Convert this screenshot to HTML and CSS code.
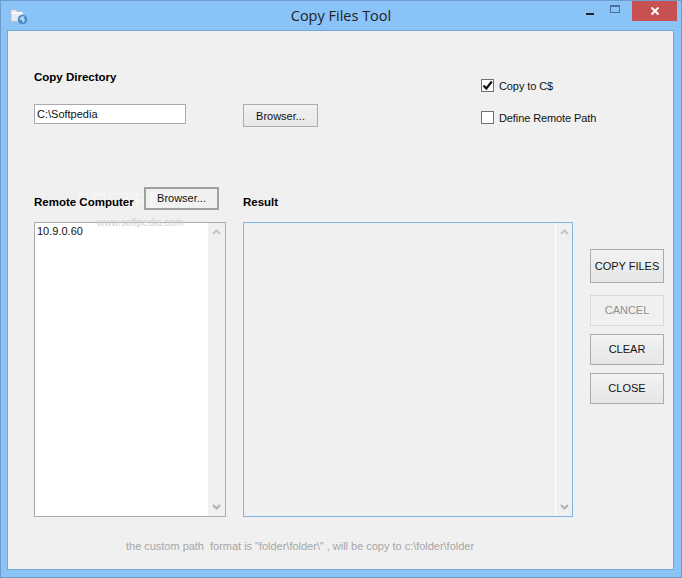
FILE: index.html
```html
<!DOCTYPE html>
<html lang="en">
<head>
<meta charset="utf-8">
<title>Copy Files Tool</title>
<link rel="stylesheet" href="styles.css">
</head>
<body>
<div class="window">
  <header class="titlebar">
    <svg class="app-icon" width="18" height="17" viewBox="0 0 18 17">
      <path d="M1 1.500h5l1 2h6v10H1z" fill="#e6ecf2" stroke="#b4c0cc" stroke-width="1"/>
      <path d="M1.500 5h11" stroke="#fff" stroke-width="1.500"/>
      <circle cx="12.500" cy="11.500" r="4.800" fill="#4a8ecb"/>
      <path d="M9.500 11c1-2.500 3.500-3 5-2.500l-1 2.300 1.800 1-2.300 3.200-1-2.800z" fill="#b4dcf5"/>
    </svg>
    <h1 class="title">Copy Files Tool</h1>
    <div class="caption-buttons">
      <span class="cap-btn"><span class="cap-min"></span></span>
      <span class="cap-btn"><span class="cap-max"></span></span>
      <span class="cap-close">
        <svg width="10" height="10" viewBox="0 0 10 10"><path d="M1.500 1.500l7 7M8.500 1.500l-7 7" stroke="#fff" stroke-width="2"/></svg>
      </span>
    </div>
  </header>
  <main class="client">
    <section class="top">
      <div class="dir-col">
        <label class="heading dir-heading">Copy Directory</label>
        <input class="textbox" type="text" value="C:\Softpedia">
      </div>
      <button class="btn browse-top">Browser...</button>
      <div class="options">
        <div class="check-row">
          <span class="checkbox">
            <svg width="11" height="11" viewBox="0 0 11 11"><path d="M1.500 5.500l2.800 3L9.800 1.500" fill="none" stroke="#111" stroke-width="2.200"/></svg>
          </span>
          <span>Copy to C$</span>
        </div>
        <div class="check-row">
          <span class="checkbox"></span>
          <span>Define Remote Path</span>
        </div>
      </div>
    </section>
    <section class="middle">
      <div class="remote-col">
        <div class="remote-head">
          <span class="wm wm-big">SOFTPEDIA</span>
          <span class="heading">Remote Computer</span>
          <button class="btn btn-focus">Browser...</button>
          <span class="wm wm-small">www.softpedia.com</span>
        </div>
        <div class="listbox">
          <div class="list-text">10.9.0.60</div>
          <div class="scrollbar">
            <svg class="arrow" width="9" height="6" viewBox="0 0 9 6"><path d="M1 5l3.500-3.500L8 5" fill="none" stroke="#c4c4c4" stroke-width="2"/></svg>
            <svg class="arrow" width="9" height="6" viewBox="0 0 9 6"><path d="M1 1l3.500 3.500L8 1" fill="none" stroke="#b0b0b0" stroke-width="2"/></svg>
          </div>
        </div>
      </div>
      <div class="result-col">
        <div class="result-head"><span class="heading">Result</span></div>
        <div class="listbox result-box">
          <div class="list-text"></div>
          <div class="scrollbar result-bar">
            <svg class="arrow" width="9" height="6" viewBox="0 0 9 6"><path d="M1 5l3.500-3.500L8 5" fill="none" stroke="#c4c4c4" stroke-width="2"/></svg>
            <svg class="arrow" width="9" height="6" viewBox="0 0 9 6"><path d="M1 1l3.500 3.500L8 1" fill="none" stroke="#b0b0b0" stroke-width="2"/></svg>
          </div>
        </div>
      </div>
      <div class="actions">
        <button class="btn act act-tall">COPY FILES</button>
        <button class="btn act btn-disabled" disabled>CANCEL</button>
        <button class="btn act act-clear">CLEAR</button>
        <button class="btn act act-close">CLOSE</button>
      </div>
    </section>
    <p class="hint">the custom path&nbsp; format is "folder\folder\" , will be copy to c:\folder\folder</p>
  </main>
</div>
</body>
</html>
```
FILE: styles.css
```css
* { box-sizing: border-box; }
html, body { margin: 0; padding: 0; }
body { width: 682px; height: 578px; overflow: hidden; font-family: "Liberation Sans", Arial, sans-serif; font-size: 11px; color: #111; }
.window { width: 682px; height: 578px; display: flex; flex-direction: column; background: #89c3f8; border: 1px solid #6f9cc8; padding: 0 7px 7px 6px; }
.titlebar { height: 29px; flex: none; display: flex; align-items: flex-start; position: relative; }
.app-icon { margin: 7px 0 0 3px; }
.title { position: absolute; left: 1px; right: 0; top: 6px; margin: 0; text-align: center; font: 400 14.500px/18px "Open Sans", sans-serif; color: #222; }
.caption-buttons { margin-left: auto; margin-right: -3px; display: flex; position: relative; }
.cap-btn { width: 30px; height: 20px; display: flex; align-items: center; justify-content: center; }
.cap-min { width: 8px; height: 2px; background: #222; margin-top: 5px; margin-left: 12px; }
.cap-max { width: 10px; height: 8px; border: 1px solid #4e6f93; border-top-width: 2px; margin-top: -4px; margin-left: 2px; }
.cap-close { width: 45px; height: 20px; margin-left: 3px; background: #c75050; display: flex; align-items: center; justify-content: center; }
.client { flex: 1; background: #f0f0f0; border: 1px solid #76a5d2; padding: 0 0 0 26px; display: flex; flex-direction: column; }
.top { display: flex; height: 156px; }
.dir-col { width: 209px; display: flex; flex-direction: column; align-items: flex-start; padding-top: 39px; }
.heading { font-weight: 700; font-size: 11.500px; line-height: 14px; color: #000; white-space: nowrap; }
.dir-heading { height: 14px; margin-bottom: 20px; }
.textbox { width: 152px; height: 20px; border: 1px solid #ababab; background: #fff; padding: 0 2px; font: 11px "Liberation Sans", sans-serif; color: #111; outline: none; }
.btn { background: linear-gradient(#f2f2f2, #e6e6e6); border: 1px solid #acacac; font: 11px "Liberation Sans", sans-serif; color: #111; padding: 0; width: 75px; height: 23px; }
.browse-top { margin-top: 73px; }
.options { margin-left: 163px; padding-top: 48px; display: flex; flex-direction: column; gap: 19px; letter-spacing: -.1px; }
.check-row { display: flex; align-items: center; gap: 5px; height: 13px; white-space: nowrap; }
.checkbox { width: 13px; height: 13px; border: 1px solid #707070; background: #fff; display: flex; align-items: center; justify-content: center; flex: none; }
.middle { display: flex; height: 330px; }
.remote-col { width: 192px; margin-right: 17px; display: flex; flex-direction: column; }
.remote-head { height: 35px; position: relative; display: flex; align-items: flex-start; }
.remote-head .heading { margin-top: 8px; width: 110px; position: relative; }
.btn-focus { border: 2px solid #a0a0a0; position: relative; background: transparent; padding-bottom: 1px; }
.wm { position: absolute; white-space: nowrap; pointer-events: none; }
.wm-big { left: 42px; top: 1px; font-size: 21px; letter-spacing: .5px; color: #f6f6f6; }
.wm-small { left: 63px; top: 30px; font-size: 10px; color: #d0d0d0; z-index: 1; }
.listbox { width: 192px; height: 295px; background: #fff; border: 1px solid #ababab; display: flex; justify-content: space-between; }
.list-text { padding: 2px 2px; line-height: 13px; }
.scrollbar { width: 17px; background: #f0f0f0; display: flex; flex-direction: column; justify-content: space-between; align-items: center; padding: 6px 0; }
.result-col { width: 330px; margin-right: 17px; display: flex; flex-direction: column; }
.result-head { height: 35px; padding-top: 8px; }
.result-box { width: 330px; background: #f0f0f0; border-color: #7fb4e8; }
.result-bar { border-left: 1px solid #fff; }
.actions { width: 74px; padding-top: 62px; display: flex; flex-direction: column; }
.act { width: 74px; height: 31px; padding-bottom: 1px; }
.act-tall { height: 34px; margin-bottom: 12px; }
.btn-disabled { background: #f0f0f0; border-color: #d9d9d9; color: #8f8f8f; margin-bottom: 8px; }
.act-clear { margin-bottom: 8px; }
.hint { margin: 22px 0 0 92px; color: #a6a6a6; line-height: 14px; white-space: nowrap; letter-spacing: -.02px; }
```
